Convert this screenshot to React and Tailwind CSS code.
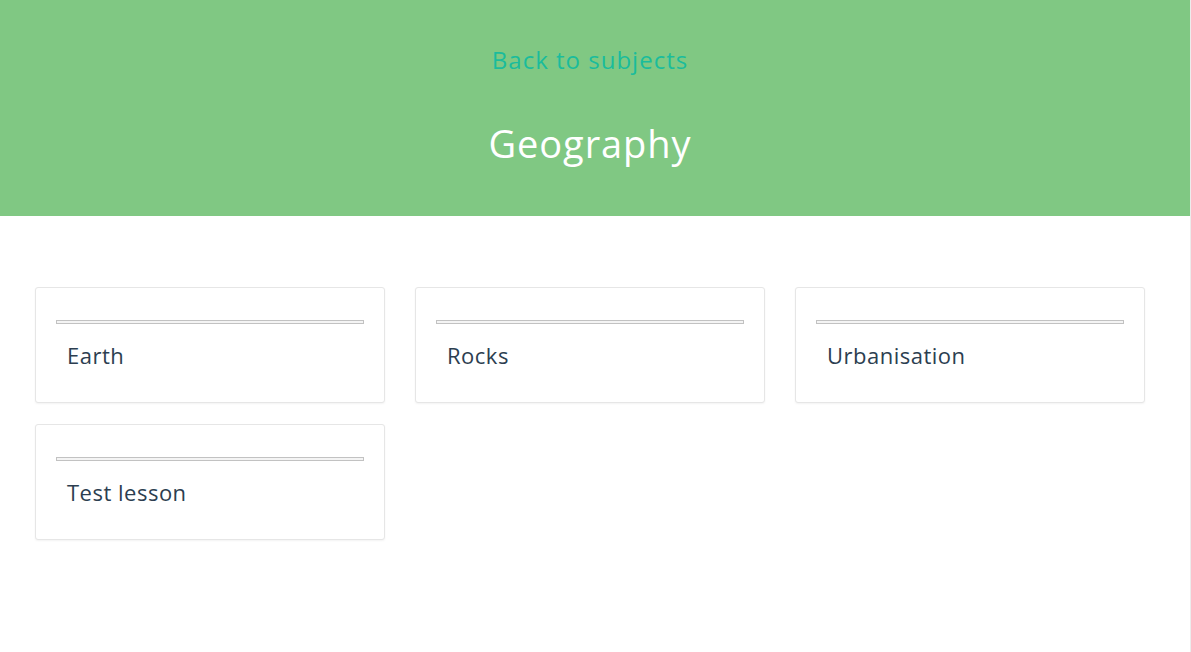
import React from "react";

const lessons = ["Earth", "Rocks", "Urbanisation", "Test lesson"];

export default function App() {
  return (
    <div
      className="min-h-screen bg-white w-[1191px] border-r border-[#ececec]"
      style={{ fontFamily: "'Open Sans', 'Noto Sans', sans-serif" }}
    >
      <header className="bg-[#80c883] h-[216px] flex flex-col items-center pt-[42px] pr-[10px]">
        <a className="text-[24px] leading-[36px] text-[#1abc9c] tracking-[1px] cursor-pointer">
          Back to subjects
        </a>
        <h1 className="mt-[40px] text-[38px] leading-[50px] text-white font-normal tracking-[0.9px]">
          Geography
        </h1>
      </header>

      <main className="pt-[71px] pl-[35px]">
        <div className="grid grid-cols-[350px_350px_350px] gap-x-[30px] gap-y-[21px]">
          {lessons.map((name) => (
            <div
              key={name}
              className="h-[116px] bg-white border border-[#e6e6e6] rounded-[3px] shadow-[0_1px_2px_rgba(0,0,0,0.05)] px-[20px] pt-[32px]"
            >
              <div className="h-[4px] border border-[#c2c2c2] bg-[#f4f4f4]" />
              <div className="pl-[11px] mt-[16px] text-[22px] leading-[30px] text-[#2c3e50] tracking-[0.5px]">
                {name}
              </div>
            </div>
          ))}
        </div>
      </main>
    </div>
  );
}
